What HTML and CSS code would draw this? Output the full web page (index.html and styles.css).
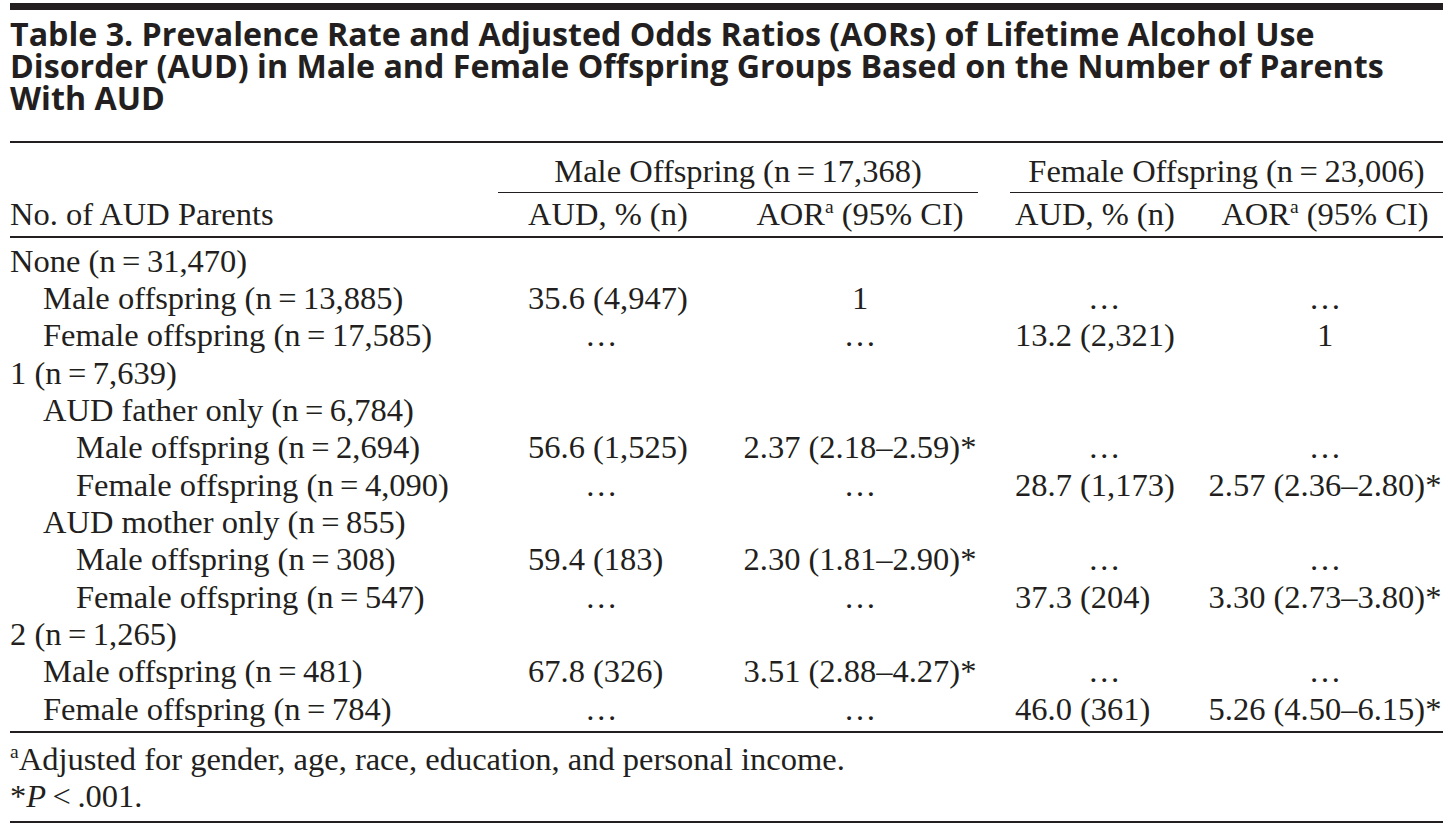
FILE: index.html
```html
<!DOCTYPE html>
<html lang="en">
<head>
<meta charset="utf-8">
<title>Table 3</title>
<link rel="stylesheet" href="styles.css">
</head>
<body>
<div class="page">
  <div class="topbar"></div>
  <h1 class="title">Table 3. Prevalence Rate and Adjusted Odds Ratios (AORs) of Lifetime Alcohol Use<br>Disorder (AUD) in Male and Female Offspring Groups Based on the Number of Parents<br>With AUD</h1>
  <div class="tbl">
    <div class="thead">
      <div class="row spanrow">
        <div class="span span-m"><span>Male Offspring (n&thinsp;=&thinsp;17,368)</span></div>
        <div class="span span-f"><span>Female Offspring (n&thinsp;=&thinsp;23,006)</span></div>
      </div>
      <div class="row headrow">
        <div class="lab">No. of AUD Parents</div>
        <div class="aud-m">AUD, % (n)</div>
        <div class="aor"><span>AOR<sup class="sup">a</sup> (95% CI)</span></div>
        <div class="gap"></div>
        <div class="aud-f">AUD, % (n)</div>
        <div class="aor"><span>AOR<sup class="sup">a</sup> (95% CI)</span></div>
      </div>
    </div>
    <div class="tbody">
      <div class="row"><div class="lab">None (n&thinsp;=&thinsp;31,470)</div></div>
      <div class="row">
        <div class="lab i1">Male offspring (n&thinsp;=&thinsp;13,885)</div>
        <div class="aud-m">35.6 (4,947)</div>
        <div class="aor"><span>1</span></div>
        <div class="gap"></div>
        <div class="aud-f dots">…</div>
        <div class="aor"><span>…</span></div>
      </div>
      <div class="row">
        <div class="lab i1">Female offspring (n&thinsp;=&thinsp;17,585)</div>
        <div class="aud-m dots">…</div>
        <div class="aor"><span>…</span></div>
        <div class="gap"></div>
        <div class="aud-f">13.2 (2,321)</div>
        <div class="aor"><span>1</span></div>
      </div>
      <div class="row"><div class="lab">1 (n&thinsp;=&thinsp;7,639)</div></div>
      <div class="row"><div class="lab i1">AUD father only (n&thinsp;=&thinsp;6,784)</div></div>
      <div class="row">
        <div class="lab i2">Male offspring (n&thinsp;=&thinsp;2,694)</div>
        <div class="aud-m">56.6 (1,525)</div>
        <div class="aor"><span>2.37 (2.18–2.59)*</span></div>
        <div class="gap"></div>
        <div class="aud-f dots">…</div>
        <div class="aor"><span>…</span></div>
      </div>
      <div class="row">
        <div class="lab i2">Female offspring (n&thinsp;=&thinsp;4,090)</div>
        <div class="aud-m dots">…</div>
        <div class="aor"><span>…</span></div>
        <div class="gap"></div>
        <div class="aud-f">28.7 (1,173)</div>
        <div class="aor"><span>2.57 (2.36–2.80)*</span></div>
      </div>
      <div class="row"><div class="lab i1">AUD mother only (n&thinsp;=&thinsp;855)</div></div>
      <div class="row">
        <div class="lab i2">Male offspring (n&thinsp;=&thinsp;308)</div>
        <div class="aud-m">59.4 (183)</div>
        <div class="aor"><span>2.30 (1.81–2.90)*</span></div>
        <div class="gap"></div>
        <div class="aud-f dots">…</div>
        <div class="aor"><span>…</span></div>
      </div>
      <div class="row">
        <div class="lab i2">Female offspring (n&thinsp;=&thinsp;547)</div>
        <div class="aud-m dots">…</div>
        <div class="aor"><span>…</span></div>
        <div class="gap"></div>
        <div class="aud-f">37.3 (204)</div>
        <div class="aor"><span>3.30 (2.73–3.80)*</span></div>
      </div>
      <div class="row"><div class="lab">2 (n&thinsp;=&thinsp;1,265)</div></div>
      <div class="row">
        <div class="lab i1">Male offspring (n&thinsp;=&thinsp;481)</div>
        <div class="aud-m">67.8 (326)</div>
        <div class="aor"><span>3.51 (2.88–4.27)*</span></div>
        <div class="gap"></div>
        <div class="aud-f dots">…</div>
        <div class="aor"><span>…</span></div>
      </div>
      <div class="row">
        <div class="lab i1">Female offspring (n&thinsp;=&thinsp;784)</div>
        <div class="aud-m dots">…</div>
        <div class="aor"><span>…</span></div>
        <div class="gap"></div>
        <div class="aud-f">46.0 (361)</div>
        <div class="aor"><span>5.26 (4.50–6.15)*</span></div>
      </div>
    </div>
    <div class="notes">
      <p><sup class="sup">a</sup>Adjusted for gender, age, race, education, and personal income.</p>
      <p>*<i>P</i>&thinsp;&lt;&thinsp;.001.</p>
    </div>
  </div>
</div>
</body>
</html>
```

FILE: styles.css
```css
* { box-sizing: border-box; }

body {
  margin: 0;
  background: #ffffff;
  color: #231f20;
  font-family: "Liberation Serif", "Times New Roman", serif;
}

.page {
  width: 1433px;
  margin-left: 10px;
  padding-top: 3px;
}

.topbar {
  height: 7px;
  background: #231f20;
}

.title {
  margin: 8px 0 27px;
  font-family: "Open Sans", "Noto Sans", sans-serif;
  font-weight: 700;
  font-size: 32.2px;
  line-height: 32px;
  white-space: nowrap;
}

.tbl {
  border-top: 2px solid #231f20;
  font-size: 32.5px;
  line-height: 37.33px;
}

.row {
  display: grid;
  grid-template-columns: 488px 244px 236px 32px 197px 236px;
  white-space: nowrap;
}

.spanrow { padding-top: 10px; }

.span {
  display: flex;
  justify-content: center;
  padding-bottom: 2px;
  border-bottom: 1.5px solid #231f20;
}
.span-m { grid-column: 2 / 4; }
.span-f { grid-column: 5 / 7; }

.headrow { padding: 3px 0 2px; }

.thead { border-bottom: 2px solid #231f20; }

.tbody {
  padding: 5px 0 3px;
  border-bottom: 2px solid #231f20;
}

.i1 { padding-left: 33px; }
.i2 { padding-left: 66px; }

.aud-m { padding-left: 30px; }
.aud-f { padding-left: 5px; }
.aud-m.dots { padding-left: 87px; }
.aud-f.dots { padding-left: 78px; }

.aor {
  display: flex;
  justify-content: center;
}

.sup {
  font-size: 0.6em;
  line-height: 0;
  vertical-align: 0.62em;
}

.notes {
  padding: 8px 0 5px;
  border-bottom: 2px solid #231f20;
}
.notes p { margin: 0; }
```
